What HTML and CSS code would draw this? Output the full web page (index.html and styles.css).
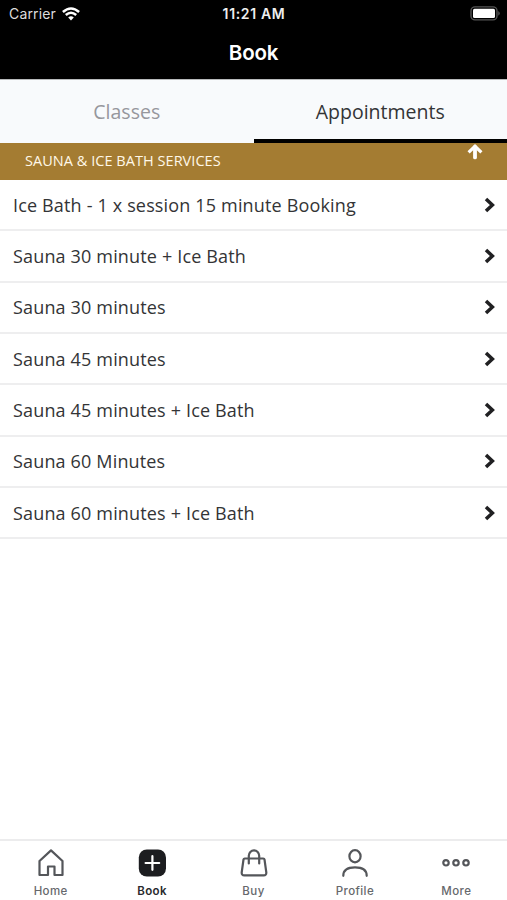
FILE: index.html
```html
<!DOCTYPE html>
<html lang="en">
<head>
<meta charset="utf-8">
<title>Book</title>
<link rel="stylesheet" href="styles.css">
</head>
<body>
<div class="app">
  <header class="header">
    <div class="status">
      <div class="carrier"><span>Carrier</span>
        <svg width="18" height="14" viewBox="0 0 18 14" fill="none" stroke="#fff" stroke-width="2.5"><path d="M.9 5Q9-2.1 17.1 5M3.8 8Q9 3.4 14.2 8"/><path d="M6.2 10.5Q9 8 11.8 10.5L9 13.4z" fill="#fff" stroke="none"/></svg>
      </div>
      <time class="time">11:21 AM</time>
      <svg class="battery" width="31" height="15" viewBox="0 0 31 15"><rect x="1" y=".9" width="26" height="13" rx="4" fill="none" stroke="#555" stroke-width="1.4"/><rect x="3" y="2.8" width="22" height="9.2" rx="1.5" fill="#fff"/><path d="M28.4 5Q31 7.4 28.4 9.8z" fill="#666"/></svg>
    </div>
    <h1 class="title">Book</h1>
  </header>
  <nav class="tabs">
    <a class="tab">Classes</a>
    <a class="tab tab-active">Appointments</a>
  </nav>
  <main class="content">
    <div class="section">
      <h2 class="section-title">SAUNA &amp; ICE BATH SERVICES</h2>
      <svg class="up" width="16" height="16" viewBox="0 0 16 16" fill="none" stroke="#fff"><path d="M8 13.4V3" stroke-width="3.8" stroke-linecap="round"/><path d="M1.600 8.300L8 2.300L14.400 8.300" stroke-width="3.2"/></svg>
    </div>
    <ul class="list">
      <li class="row"><span>Ice Bath - 1 x session 15 minute Booking</span><svg class="chev" viewBox="0 0 12 16"><path d="M2 1.9L8.4 8L2 14.1"/></svg></li>
      <li class="row"><span>Sauna 30 minute + Ice Bath</span><svg class="chev" viewBox="0 0 12 16"><path d="M2 1.9L8.4 8L2 14.1"/></svg></li>
      <li class="row"><span>Sauna 30 minutes</span><svg class="chev" viewBox="0 0 12 16"><path d="M2 1.9L8.4 8L2 14.1"/></svg></li>
      <li class="row"><span>Sauna 45 minutes</span><svg class="chev" viewBox="0 0 12 16"><path d="M2 1.9L8.4 8L2 14.1"/></svg></li>
      <li class="row"><span>Sauna 45 minutes + Ice Bath</span><svg class="chev" viewBox="0 0 12 16"><path d="M2 1.9L8.4 8L2 14.1"/></svg></li>
      <li class="row"><span>Sauna 60 Minutes</span><svg class="chev" viewBox="0 0 12 16"><path d="M2 1.9L8.4 8L2 14.1"/></svg></li>
      <li class="row"><span>Sauna 60 minutes + Ice Bath</span><svg class="chev" viewBox="0 0 12 16"><path d="M2 1.9L8.4 8L2 14.1"/></svg></li>
    </ul>
  </main>
  <nav class="bottom">
    <a class="item"><svg class="icon" viewBox="0 0 28 28"><path d="M2.500 12L14 1.400L25.500 12V26H17.500V17.500H11V26H2.500z"/></svg><span>Home</span></a>
    <a class="item item-active"><svg class="icon" viewBox="0 0 28 28"><rect x=".8" y=".4" width="27.200" height="27.200" rx="8" fill="#1c1d20" stroke="none"/><path d="M14.400 7.200V20.800M7.600 14H21.200" stroke="#fff"/></svg><span>Book</span></a>
    <a class="item"><svg class="icon" viewBox="0 0 28 28"><path d="M4.800 9.500H23.200Q24.300 9.500 24.500 10.500L26.300 23.300Q26.500 26.400 23.700 26.400H4.300Q1.500 26.400 1.700 23.300L3.500 10.500Q3.700 9.500 4.800 9.500z"/><path d="M8.800 14.500V6.800A5.200 5.400 0 0 1 19.200 6.800V14.500"/></svg><span>Buy</span></a>
    <a class="item"><svg class="icon" viewBox="0 0 28 28"><ellipse cx="14" cy="7.200" rx="5.600" ry="6.100"/><path d="M2.300 26.800C2.300 21 6 18.400 14 18.400S25.700 21 25.700 26.800"/></svg><span>Profile</span></a>
    <a class="item"><svg class="icon" viewBox="0 0 28 28"><circle cx="4" cy="13.800" r="2.700"/><circle cx="14" cy="13.800" r="2.700"/><circle cx="24" cy="13.800" r="2.700"/></svg><span>More</span></a>
  </nav>
</div>
</body>
</html>
```
FILE: styles.css
```css
* { box-sizing: border-box; }
body { margin: 0; background: #fff; font-family: "Open Sans", sans-serif; color: #333436; }
.app { height: 900px; display: flex; flex-direction: column; overflow: hidden; }
.header { height: 79px; background: #000; color: #fff; font-family: Inter, sans-serif; }
.status { height: 27px; display: grid; grid-template-columns: 1fr auto 1fr; align-items: center; padding: 0 6px 0 9px; }
.carrier { display: flex; align-items: center; gap: 6px; font-size: 14px; letter-spacing: .15px; color: #ddd; }
.time { font-size: 14px; font-weight: 600; letter-spacing: .65px; margin-right: 2px; color: #eee; }
.battery { justify-self: end; }
.title { margin: 0; height: 52px; line-height: 52px; text-align: center; font-size: 20.500px; font-weight: 600; letter-spacing: -.2px; }
.tabs { height: 63.500px; display: flex; background: #f8fafc; border-top: 1px solid #b8babb; }
.tab { flex: 1; text-align: center; font-size: 19.500px; line-height: 64px; color: #96979d; }
.tab-active { color: #333436; border-bottom: 4px solid #000; }
.content { flex: 1; }
.section { height: 37.500px; background: #a47c32; display: flex; justify-content: space-between; padding: 0 24.500px 0 25px; }
.section-title { margin: 0; font-size: 14.500px; line-height: 36px; font-weight: 400; letter-spacing: .04px; color: #fff8e8; }
.up { margin-top: 1px; }
.list { margin: 0; padding: 0; list-style: none; }
.row { height: 51.330px; display: flex; align-items: center; justify-content: space-between; padding: 0 11px 0 13px; border-bottom: 2px solid #eeeeef; font-size: 18px; letter-spacing: .16px; }
.chev { width: 12px; height: 16px; fill: none; stroke: #202022; stroke-width: 3.500; }
.bottom { height: 61px; border-top: 2px solid #ececed; display: flex; }
.item { flex: 1; display: flex; flex-direction: column; align-items: center; padding-top: 8px; font-family: Inter, sans-serif; font-size: 11.500px; font-weight: 500; letter-spacing: .4px; line-height: 16px; color: #66686c; }
.item-active { color: #292a2d; font-weight: 600; }
.icon { width: 28px; height: 28px; margin-bottom: 6px; fill: none; stroke: #54565a; stroke-width: 2.200; stroke-linejoin: round; stroke-linecap: round; }
```
